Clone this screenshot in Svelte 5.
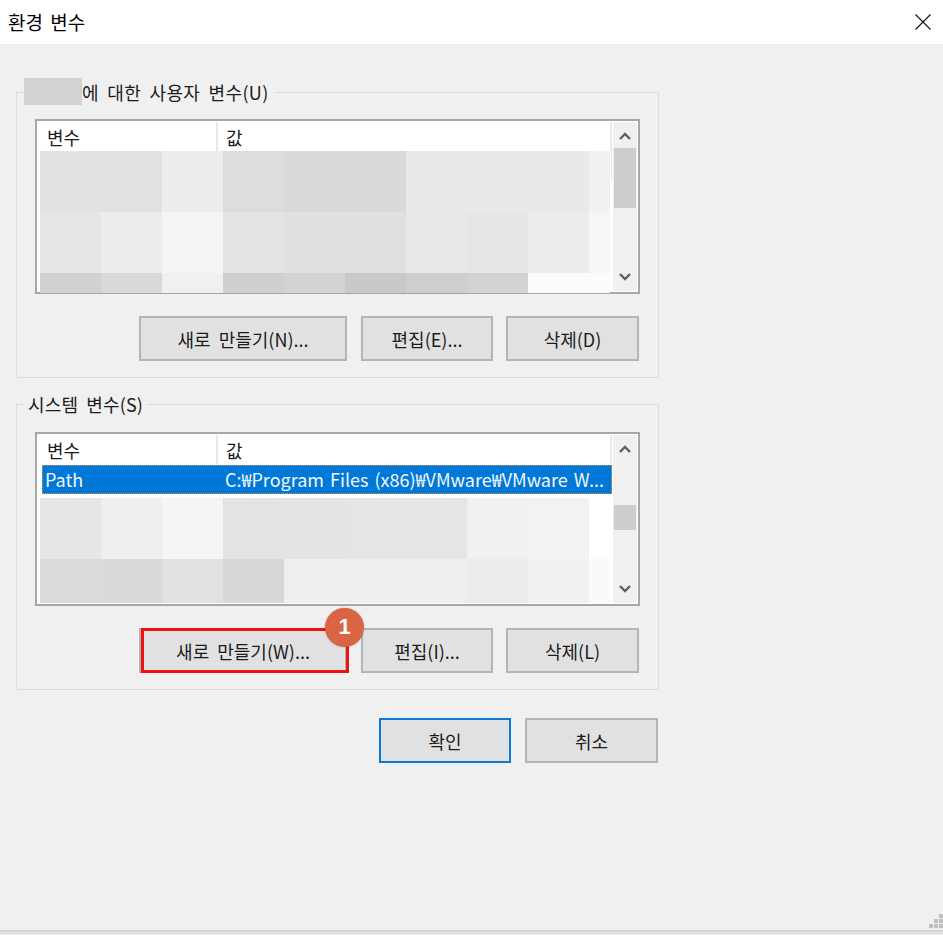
<script>
  const userRows = [
    ['e2e2e1', 'e0e1e0', 'ededed', 'dddddd', 'd9d9d9', 'dadada', 'e9e9e9', 'e9e9e9', 'e9e9e9', 'f1f1f1'],
    ['e6e6e6', 'ececec', 'f4f4f4', 'e3e3e2', 'e1e0df', 'e0e0e0', 'e7e8e7', 'e6e6e6', 'ececea', 'f5f6f8'],
    ['d1d1d1', 'd9d9d9', 'eff0f0', 'cfcfcf', 'd3d3d3', 'c9c9c9', 'cdcecd', 'd2d2d2', 'fafbfa', 'fafbfa']
  ];
  const systemRows = [
    ['e6e6e6', 'eeeeee', 'f5f5f5', 'e3e3e3', 'e4e4e4', 'e5e5e5', 'e5e5e5', 'f1f1f1', 'f2f2f2', 'ffffff'],
    ['dbdbdb', 'dadada', 'e1e3e2', 'd7d7d6', 'eeeeee', 'eeeeee', 'eeeeee', 'ececec', 'f1f1f1', 'fafafa']
  ];
</script>

{#snippet chevrons()}
  <svg class="arrow" width="14" height="10" viewBox="0 0 14 10"><path d="M2 8 L7 3 L12 8" /></svg>
  <svg class="arrow" width="14" height="10" viewBox="0 0 14 10"><path d="M2 2 L7 7 L12 2" /></svg>
{/snippet}

{#snippet mosaic(rows)}
  {#each rows as row, r}
    <div class="mosaic-row" class:short={r === rows.length - 1}>
      {#each row as c}
        <i style="background:#{c}"></i>
      {/each}
    </div>
  {/each}
{/snippet}

{#snippet header()}
  <div class="head">
    <span class="col-name">변수</span>
    <span class="col-value">값</span>
  </div>
{/snippet}

<div class="window">
  <header class="titlebar">
    <span>환경 변수</span>
    <svg width="16" height="16" viewBox="0 0 16 16"><path d="M0.5 0.5 L15.5 15.5 M15.5 0.5 L0.5 15.5" /></svg>
  </header>

  <main class="body">
    <fieldset class="group user">
      <legend><span class="redacted"></span>에 대한 사용자 변수(U)</legend>
      <div class="list">
        <div class="table">
          {@render header()}
          <div class="rows">{@render mosaic(userRows)}</div>
        </div>
        <div class="scrollbar">
          {@render chevrons()}
          <div class="thumb"></div>
        </div>
      </div>
      <div class="buttons">
        <button class="wide">새로 만들기(N)...</button>
        <button class="mid">편집(E)...</button>
        <button class="mid">삭제(D)</button>
      </div>
    </fieldset>

    <fieldset class="group system">
      <legend class="plain">시스템 변수(S)</legend>
      <div class="list">
        <div class="table">
          {@render header()}
          <div class="selected">
            <span class="col-name">Path</span>
            <span class="col-value">C:₩Program Files (x86)₩VMware₩VMware W...</span>
          </div>
          <div class="rows sys">{@render mosaic(systemRows)}</div>
        </div>
        <div class="scrollbar">
          {@render chevrons()}
          <div class="thumb small"></div>
        </div>
      </div>
      <div class="buttons">
        <button class="wide marked">
          새로 만들기(W)...
          <span class="redbox"></span>
          <span class="badge">1</span>
        </button>
        <button class="mid">편집(I)...</button>
        <button class="mid">삭제(L)</button>
      </div>
    </fieldset>

    <div class="actions">
      <button class="primary">확인</button>
      <button class="cancel">취소</button>
    </div>
  </main>

  <div class="grip">
    <i style="grid-area:1/3"></i>
    <i style="grid-area:2/2"></i><i style="grid-area:2/3"></i>
    <i style="grid-area:3/1"></i><i style="grid-area:3/2"></i><i style="grid-area:3/3"></i>
  </div>
  <div class="edge"></div>
</div>

<style>
  :global(body) {
    margin: 0;
    background: #f0f0f0;
    overflow: hidden;
  }
  .window {
    position: relative;
    width: 943px;
    height: 935px;
    display: flex;
    flex-direction: column;
    background: #f0f0f0;
    color: #1c1c1c;
    font-family: "Noto Sans CJK KR", "Noto Sans", sans-serif;
    font-size: 18px;
    word-spacing: 4px;
  }
  .titlebar {
    height: 44px;
    flex: none;
    background: #fff;
    color: #000;
    display: flex;
    align-items: center;
    justify-content: space-between;
    padding: 0 12px 0 8px;
    box-sizing: border-box;
    font-size: 19px;
    word-spacing: 3px;
    line-height: 44px;
  }
  .titlebar svg path {
    fill: none;
    stroke: #111;
    stroke-width: 1.1;
  }
  .body {
    flex: 1;
    padding: 34px 0 0 16px;
  }
  .group {
    width: 643px;
    box-sizing: border-box;
    margin: 0;
    padding: 0;
    border: 1px solid #dcdcdc;
  }
  .group.user {
    height: 300px;
  }
  .group.system {
    height: 298px;
    margin-top: 14px;
  }
  legend {
    margin-left: 7px;
    padding: 0 5px 0 0;
    height: 28px;
    line-height: 28px;
    display: flex;
    white-space: pre;
    letter-spacing: 0.35px;
  }
  legend.plain {
    height: 24px;
    line-height: 24px;
    padding: 0 4px;
    letter-spacing: 0.15px;
  }
  .redacted {
    width: 58px;
    height: 27px;
    background: #d2d2d2;
  }
  .list {
    display: flex;
    width: 605px;
    height: 175px;
    box-sizing: border-box;
    margin: 13px 0 0 18px;
    border: 2px solid #a4a8ac;
    background: #fff;
  }
  .system .list {
    margin-top: 16px;
    height: 174px;
  }
  .table {
    width: 576px;
    flex: none;
  }
  .head {
    height: 30px;
    display: flex;
    align-items: center;
    line-height: 30px;
    padding-top: 1px;
    box-sizing: border-box;
    background: linear-gradient(#e9e9e9, #e9e9e9) 179px 1px / 2px 29px no-repeat,
      linear-gradient(#e9e9e9, #e9e9e9) 573px 1px / 2px 29px no-repeat;
  }
  .col-name {
    width: 180px;
    flex: none;
    padding-left: 10px;
    box-sizing: border-box;
  }
  .col-value {
    padding-left: 9px;
    white-space: nowrap;
  }
  .rows {
    padding-left: 3px;
  }
  .user .rows {
    background: linear-gradient(#e4e4e4, #e4e4e4) 574px 0 / 1px 30px no-repeat;
  }
  .rows.sys {
    margin-top: 4px;
  }
  .mosaic-row {
    display: flex;
    height: 61px;
  }
  .mosaic-row.short {
    height: 20px;
  }
  .sys .mosaic-row.short {
    height: 44px;
  }
  .mosaic-row i {
    width: 61px;
    height: 100%;
    flex: none;
  }
  .mosaic-row i:last-child {
    width: 21px;
  }
  .selected {
    margin: 1px 0 0 5px;
    width: 570px;
    height: 29px;
    box-sizing: border-box;
    border: 1px dotted #d9924f;
    background: #0078d7;
    color: #f2f7fc;
    display: flex;
    align-items: center;
    line-height: 27px;
    word-spacing: 2px;
  }
  .selected .col-name {
    width: 175px;
    padding-left: 3px;
    margin-left: -1px;
  }
  .selected .col-value {
    padding-left: 8px;
  }
  .scrollbar {
    position: relative;
    width: 24px;
    margin: 1px 0 1px 0;
    background: #f0f0f0;
    display: flex;
    flex-direction: column;
    align-items: center;
    justify-content: space-between;
    padding: 9px 0;
    box-sizing: border-box;
  }
  .arrow path {
    fill: none;
    stroke: #5f5f5f;
    stroke-width: 2.4;
  }
  .thumb {
    position: absolute;
    left: 1px;
    right: 1px;
    top: 26px;
    height: 60px;
    background: #cdcdcd;
  }
  .thumb.small {
    top: 70px;
    height: 25px;
  }
  .buttons {
    display: flex;
    gap: 14px;
    margin: 22px 0 0 122px;
  }
  .buttons button:last-child {
    margin-left: -1px;
    width: 133px;
  }
  button {
    height: 45px;
    box-sizing: border-box;
    margin: 0;
    padding: 0;
    background: #e1e1e1;
    border: 2px solid #b4b4b4;
    font: inherit;
    word-spacing: inherit;
    color: inherit;
  }
  .wide {
    width: 208px;
  }
  .mid {
    width: 132px;
  }
  .marked {
    position: relative;
  }
  .redbox {
    position: absolute;
    left: 0;
    top: -2px;
    width: 208px;
    height: 45px;
    box-sizing: border-box;
    border: 3px solid #ee1111;
  }
  .badge {
    position: absolute;
    left: 184px;
    top: -22px;
    width: 39px;
    height: 39px;
    border-radius: 50%;
    background: #d96544;
    color: #fff;
    font-family: "Liberation Sans", sans-serif;
    font-weight: 700;
    font-size: 22px;
    line-height: 37px;
    text-align: center;
    box-shadow: 0 0 2px rgba(0, 0, 0, 0.25);
  }
  .actions {
    width: 642px;
    display: flex;
    justify-content: flex-end;
    gap: 14px;
    margin-top: 28px;
  }
  .primary {
    width: 132px;
    border-color: #0a7ad6;
  }
  .cancel {
    width: 133px;
  }
  .grip {
    position: absolute;
    right: 0;
    bottom: 7px;
    display: grid;
    grid-template: repeat(3, 4px) / repeat(3, 4px);
    gap: 1px;
  }
  .grip i {
    background: #bfbfbf;
  }
  .edge {
    position: absolute;
    left: 0;
    right: 0;
    bottom: 0;
    height: 5px;
    background: linear-gradient(#cfcfcf, #ebebeb);
  }
</style>
